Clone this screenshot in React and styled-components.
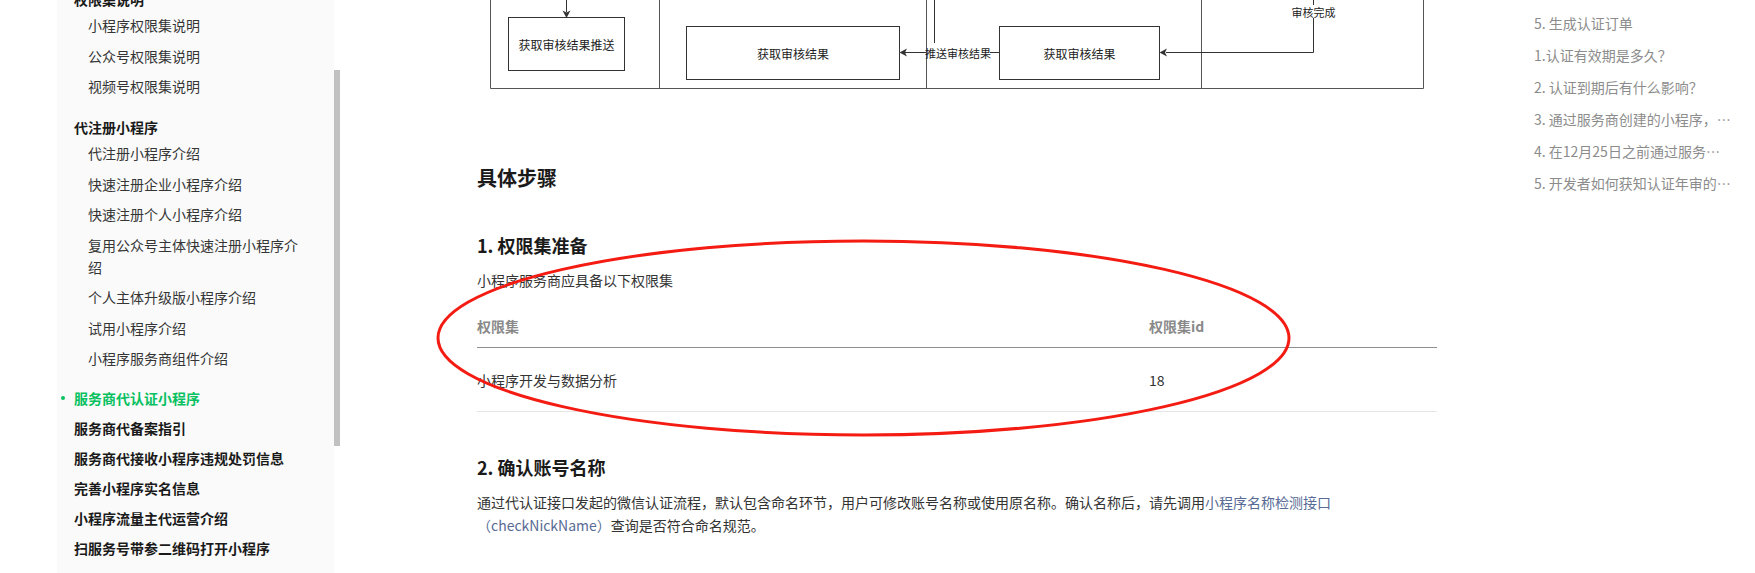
import React from "react";
import styled, { createGlobalStyle } from "styled-components";

const GlobalStyle = createGlobalStyle`
  html, body {
    margin: 0;
    padding: 0;
    background: #fff;
  }
  body {
    font-family: "Noto Sans CJK SC", "Noto Sans", sans-serif;
    color: #333;
  }
  * {
    box-sizing: border-box;
  }
`;

const Page = styled.div`
  display: flex;
  height: 573px;
  overflow: hidden;
  padding-left: 57px;
`;

const Sidebar = styled.nav`
  width: 277px;
  flex-shrink: 0;
  background: #fafafa;
  padding: 0 30px 0 17px;
  overflow: hidden;
`;

const NavList = styled.div`
  margin-top: -16.25px;
`;

const Group = styled.div`
  margin-bottom: ${(p) => (p.$spaced ? "10px" : "0")};
`;

const NavHeader = styled.div`
  position: relative;
  font-size: 14px;
  font-weight: 700;
  line-height: 22px;
  padding: ${(p) => (p.$leaf ? "4px 0" : "4.25px 0 0")};
  color: ${(p) => (p.$active ? "#07c160" : "#1a1a1a")};
  &::before {
    content: "";
    display: ${(p) => (p.$active ? "block" : "none")};
    position: absolute;
    left: -13px;
    top: 13px;
    width: 4px;
    height: 4px;
    border-radius: 50%;
    background: #07c160;
  }
`;

const NavItem = styled.div`
  font-size: 14px;
  line-height: 22px;
  padding: 4.25px 0 4.25px 14px;
  color: #353535;
`;

const ScrollTrack = styled.div`
  width: 6px;
  flex-shrink: 0;
`;

const ScrollThumb = styled.div`
  margin-top: 70px;
  height: 376px;
  background: #c1c1c1;
`;

const Main = styled.main`
  width: 1097px;
  flex-shrink: 0;
  padding-left: 137px;
`;

const Article = styled.article`
  position: relative;
  width: 960px;
`;

const Diagram = styled.div`
  display: flex;
  justify-content: center;
  height: 90px;
`;

const Title = styled.h2`
  margin: 74px 0 0;
  font-size: 20px;
  line-height: 28px;
  font-weight: 700;
  color: #1a1a1a;
`;

const Heading = styled.h3`
  margin: ${(p) => p.$top}px 0 0;
  font-size: 18px;
  line-height: 26px;
  font-weight: 700;
  color: #1a1a1a;
`;

const Para = styled.p`
  margin: ${(p) => p.$top}px 0 0;
  font-size: 14px;
  line-height: ${(p) => p.$lh || 22}px;
  color: #333;
`;

const Link = styled.span`
  color: #576b95;
`;

const Table = styled.div`
  margin-top: 14px;
  display: grid;
  grid-template-columns: 672px 1fr;
`;

const HeadCell = styled.div`
  font-size: 14px;
  line-height: 22px;
  font-weight: 700;
  color: #8a8a8a;
  padding: 10px 0;
  border-bottom: 1px solid #8f8f8f;
`;

const Cell = styled.div`
  font-size: 14px;
  line-height: 22px;
  color: #333;
  padding: 20.5px 0;
  border-bottom: 1px solid #e6e6e6;
`;

const Annotation = styled.svg`
  position: absolute;
  left: -42px;
  top: 238px;
  pointer-events: none;
`;

const Toc = styled.aside`
  margin-left: 97px;
  width: 198px;
  flex-shrink: 0;
  padding-top: 7px;
`;

const TocItem = styled.div`
  font-size: 14px;
  line-height: 22px;
  padding: 5px 0;
  color: #8c8c8c;
  white-space: nowrap;
  overflow: hidden;
  text-overflow: ellipsis;
`;

const nav = [
  { title: "权限集说明", items: ["小程序权限集说明", "公众号权限集说明", "视频号权限集说明"] },
  {
    title: "代注册小程序",
    items: [
      "代注册小程序介绍",
      "快速注册企业小程序介绍",
      "快速注册个人小程序介绍",
      "复用公众号主体快速注册小程序介绍",
      "个人主体升级版小程序介绍",
      "试用小程序介绍",
      "小程序服务商组件介绍",
    ],
  },
  { title: "服务商代认证小程序", active: true },
  { title: "服务商代备案指引" },
  { title: "服务商代接收小程序违规处罚信息" },
  { title: "完善小程序实名信息" },
  { title: "小程序流量主代运营介绍" },
  { title: "扫服务号带参二维码打开小程序" },
];

const toc = [
  "5. 生成认证订单",
  "1.认证有效期是多久？",
  "2. 认证到期后有什么影响？",
  "3. 通过服务商创建的小程序，是否需要重新认证？",
  "4. 在12月25日之前通过服务商代认证的小程序如何处理？",
  "5. 开发者如何获知认证年审的结果？",
];

const Flow = () => {
  const ink = "#333";
  const font = { fontFamily: "Noto Sans CJK SC, sans-serif", fill: "#222" };
  return (
    <svg width="935" height="90" viewBox="0 0 935 90">
      <g stroke={ink} strokeWidth="1" fill="none">
        <path d="M0.5 0 V88.5 H933.5 V0" stroke="#555" />
        <path d="M169.5 0 V88.5 M436.5 0 V88.5 M711.5 0 V88.5" stroke="#555" />
        <rect x="18.5" y="17.5" width="116" height="53" />
        <rect x="196.5" y="26.5" width="213" height="53" />
        <rect x="509.5" y="26.5" width="160" height="53" />
        <path d="M76.5 0 V12" />
        <path d="M444.5 0 V43" />
        <path d="M436 52.5 H414" />
        <path d="M500 52.5 H509.5" />
        <path d="M823.5 0 V5 M823.5 18 V52.5 H676" />
      </g>
      <g fill={ink}>
        <path d="M72.5 10.5 L76.5 18 L80.5 10.5 L76.5 12.5 Z" />
        <path d="M409.5 52.5 L417 48.5 L415 52.5 L417 56.5 Z" />
        <path d="M669.5 52.5 L677 48.5 L675 52.5 L677 56.5 Z" />
      </g>
      <g textAnchor="middle" dominantBaseline="central" style={font}>
        <text x="76.5" y="44" fontSize="12">获取审核结果推送</text>
        <text x="303" y="53" fontSize="12">获取审核结果</text>
        <text x="589.5" y="53" fontSize="12">获取审核结果</text>
        <text x="468" y="52.5" fontSize="11">推送审核结果</text>
        <text x="823.5" y="11.5" fontSize="11">审核完成</text>
      </g>
    </svg>
  );
};

export default function App() {
  return (
    <>
      <GlobalStyle />
      <Page>
        <Sidebar>
          <NavList>
            {nav.map((g) =>
              g.items ? (
                <Group key={g.title} $spaced>
                  <NavHeader>{g.title}</NavHeader>
                  {g.items.map((it) => (
                    <NavItem key={it}>{it}</NavItem>
                  ))}
                </Group>
              ) : (
                <NavHeader key={g.title} $leaf $active={g.active}>
                  {g.title}
                </NavHeader>
              )
            )}
          </NavList>
        </Sidebar>
        <ScrollTrack>
          <ScrollThumb />
        </ScrollTrack>
        <Main>
          <Article>
            <Diagram>
              <Flow />
            </Diagram>
            <Title>具体步骤</Title>
            <Heading $top={40}>1. 权限集准备</Heading>
            <Para $top={11}>小程序服务商应具备以下权限集</Para>
            <Table>
              <HeadCell>权限集</HeadCell>
              <HeadCell>权限集id</HeadCell>
              <Cell>小程序开发与数据分析</Cell>
              <Cell>18</Cell>
            </Table>
            <Heading $top={42}>2. 确认账号名称</Heading>
            <Para $top={10.5} $lh={23}>
              通过代认证接口发起的微信认证流程，默认包含命名环节，用户可修改账号名称或使用原名称。确认名称后，请先调用
              <Link>小程序名称检测接口（checkNickName）</Link>查询是否符合命名规范。
            </Para>
            <Annotation width="857" height="200" viewBox="0 0 857 200">
              <ellipse cx="428.5" cy="100" rx="425.5" ry="97" fill="none" stroke="#f41c12" strokeWidth="3" />
            </Annotation>
          </Article>
        </Main>
        <Toc>
          {toc.map((t) => (
            <TocItem key={t}>{t}</TocItem>
          ))}
        </Toc>
      </Page>
    </>
  );
}
